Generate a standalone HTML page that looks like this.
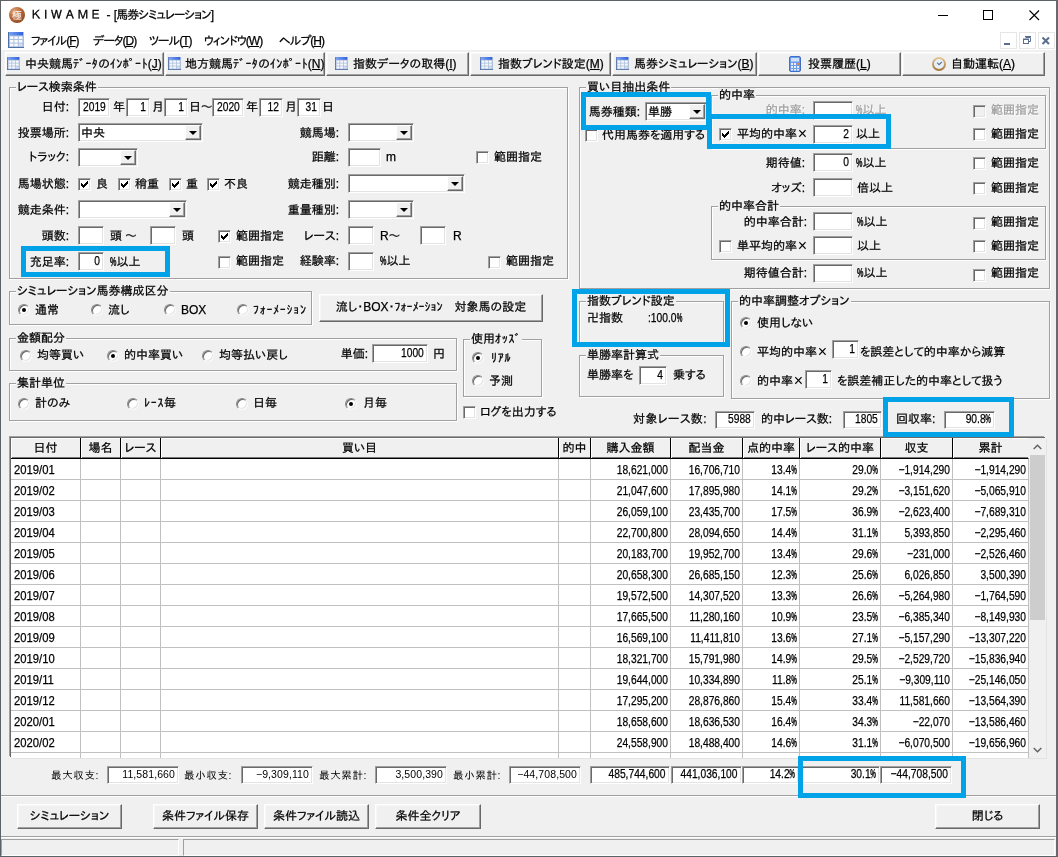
<!DOCTYPE html>
<html lang="ja"><head><meta charset="utf-8"><title>KIWAME</title>
<style>
html,body{margin:0;padding:0}
body{width:1058px;height:857px;overflow:hidden;background:#f0f0f0;position:relative;
 font-family:"Liberation Sans","IPAPGothic","IPAGothic",sans-serif;font-size:12px;color:#000;-webkit-text-stroke:0.25px #000}
#root{position:absolute;left:0;top:0;width:1058px;height:857px;will-change:transform}
#title{position:absolute;left:0;top:0;width:1058px;height:50px;background:#fff}
.abs{position:absolute}
.t{position:absolute;white-space:pre;line-height:14px;height:14px}
.ttl{font-size:12px}
.mn{font-size:12px;letter-spacing:-1px}
.lg{background:#f0f0f0;padding:0 1px}
.dis{color:#a0a0a0;-webkit-text-stroke:0.25px #a0a0a0;text-shadow:1px 1px 0 #fff}
.sm{font-size:10.5px;letter-spacing:0.6px;-webkit-text-stroke:0}
.num{font-size:12.5px;letter-spacing:0;transform:scaleX(.82);transform-origin:0 50%}
.t.num{display:inline-block}
.nr{position:absolute;right:3px;top:0.4px;transform-origin:100% 50%}
.td.r.num{transform-origin:100% 50%}
.num .pc{width:7px;transform:scaleX(.62)}
.dt{font-size:12.5px;transform:scaleX(.9);transform-origin:0 50%}
.ed{position:absolute;box-sizing:border-box;background:#fff;border:1px solid;border-color:#a0a0a0 #fff #fff #a0a0a0;
 box-shadow:inset 1px 1px 0 #696969,inset -1px -1px 0 #e3e3e3;padding:1px 3px 0 4px;white-space:pre;overflow:hidden}
.ed.r{text-align:right}
.ed.sm{font-size:10.5px;letter-spacing:0.1px;padding-top:0;-webkit-text-stroke:0}
.cbx{padding-left:2px}
.dd{position:absolute;right:1px;top:1px;width:16px;background:#f0f0f0;box-sizing:border-box;border:1px solid;border-color:#fff #696969 #696969 #fff;box-shadow:inset -1px -1px 0 #a0a0a0;display:block}
.dd b{position:absolute;left:3px;top:50%;margin-top:-2px;width:0;height:0;border-left:4px solid transparent;border-right:4px solid transparent;border-top:4px solid #000}
.cb{position:absolute;width:13px;height:13px;box-sizing:border-box;background:#fff;border:1px solid;border-color:#a0a0a0 #fff #fff #a0a0a0;box-shadow:inset 1px 1px 0 #696969,inset -1px -1px 0 #e3e3e3}
.cb.dis{background:#f0f0f0}
.cb svg{position:absolute;left:1px;top:1px}
.rd{position:absolute;width:12px;height:12px;box-sizing:border-box;border-radius:50%;background:#fff;border:1px solid;border-color:#8a8a8a #f8f8f8 #f8f8f8 #8a8a8a;box-shadow:inset 1px 1px 0 #696969,inset -1px -1px 0 #e3e3e3;transform:rotate(0deg)}
.rd i{position:absolute;left:3px;top:3px;width:4px;height:4px;border-radius:50%;background:#000}
.gb{position:absolute;border:1px solid #a0a0a0;box-shadow:1px 1px 0 #fff,inset 1px 1px 0 #fff}
.btn{position:absolute;box-sizing:border-box;background:#f0f0f0;border:1px solid;border-color:#fff #696969 #696969 #fff;box-shadow:inset -1px -1px 0 #a0a0a0,inset 1px 1px 0 #f7f7f7;text-align:center;white-space:pre}
.bb{position:absolute;border-style:solid;border-color:#00a2e8;z-index:5}
.mdib{position:absolute;top:32px;width:17px;height:17px;box-sizing:border-box;background:#fff;border:1px solid #e6e6e6}
.mdib svg{position:absolute;left:-1px;top:0}
#tbl{position:absolute;left:11px;top:438px;width:1035px;height:320px;background:#fff;overflow:hidden;
 box-shadow:-1px -1px 0 #696969,-2px -2px 0 #a0a0a0, 1px 1px 0 #e3e3e3}
.th{position:absolute;top:0;height:20px;line-height:20px;background:#f0f0f0;text-align:center;border-right:1px solid #000;border-bottom:1px solid #000;box-shadow:inset 1px 1px 0 #fff,inset 0 -1px 0 #777;white-space:pre}
.vl{position:absolute;top:21px;width:1px;height:300px;background:#c0c0c0}
.hl{position:absolute;left:0;width:1018px;height:1px;background:#c0c0c0}
.td{position:absolute;height:20px;line-height:22px;white-space:pre}
.td.r{text-align:right}
.sb{position:absolute;left:1018px;top:0;width:17px;height:320px;background:#f0f0f0}
.sb .thumb{position:absolute;left:1px;top:17px;width:15px;height:165px;background:#cdcdcd}
.sep{position:absolute;left:1px;width:1055px;height:1px;background:#a0a0a0;box-shadow:0 1px 0 #fff}
.stp{position:absolute;top:839px;height:17px;box-sizing:border-box;border:1px solid;border-color:#a0a0a0 #fff #fff #a0a0a0}
u{text-decoration:underline}
.pc{font-weight:bold;display:inline-block;width:6.4px;transform:scaleX(0.6);transform-origin:0 50%;letter-spacing:0}
.xx{-webkit-text-stroke:0;display:inline-block;width:11px;text-align:center;font-size:16px;line-height:10px;vertical-align:-1px;letter-spacing:0}
.hk{letter-spacing:0.7px}
.tbt .hk{letter-spacing:0.4px}
.btn .hk{letter-spacing:0}
.thl{border-right-color:#f0f0f0}

</style></head>
<body>
<div id="root">
<div id="title"></div>
<svg class="abs" style="left:9px;top:7px" width="16" height="16" viewBox="0 0 16 16"><defs><radialGradient id="ig" cx="35%" cy="30%" r="75%"><stop offset="0" stop-color="#e2a77c"/><stop offset="0.55" stop-color="#b8683a"/><stop offset="1" stop-color="#8f4a22"/></radialGradient></defs><circle cx="8" cy="8" r="8" fill="url(#ig)"/><text x="8" y="11.6" font-size="10" text-anchor="middle" fill="#fff" font-family="'Liberation Sans','IPAPGothic','IPAGothic',sans-serif">極</text></svg>
<span class="t ttl" style="left:32px;top:8px"><span style="letter-spacing:3.6px">ＫＩＷＡＭＥ</span> - <span style="letter-spacing:-0.9px">[馬券シミュレーション]</span></span>
<svg class="abs" style="left:930px;top:5px" width="120" height="22" viewBox="0 0 120 22"><path d="M8 10.5 H18" stroke="#000" stroke-width="1" fill="none"/><rect x="53.5" y="5.5" width="9" height="9" stroke="#000" fill="none"/><path d="M99.5 5.5 L109 15 M109 5.5 L99.5 15" stroke="#000" stroke-width="1.1" fill="none"/></svg>
<svg class="abs" style="left:8px;top:32px" width="16" height="16" viewBox="0 0 16 16"><defs><linearGradient id="gh8" x1="0" y1="0" x2="1" y2="0"><stop offset="0" stop-color="#7aa2f2"/><stop offset="1" stop-color="#2f62de"/></linearGradient></defs><rect x="0" y="0" width="16" height="16" fill="#4f6fa8"/><rect x="1" y="0" width="15" height="15" fill="#aebfdb"/><rect x="1" y="0" width="14" height="3.4" fill="url(#gh8)"/><g fill="#f7faff"><rect x="2" y="4.4" width="3.4" height="2.6"/><rect x="6.4" y="4.4" width="3.4" height="2.6"/><rect x="10.8" y="4.4" width="3.6" height="2.6"/><rect x="2" y="8" width="3.4" height="2.6"/><rect x="6.4" y="8" width="3.4" height="2.6"/><rect x="10.8" y="8" width="3.6" height="2.6"/><rect x="2" y="11.6" width="3.4" height="2.6"/><rect x="6.4" y="11.6" width="3.4" height="2.6"/><rect x="10.8" y="11.6" width="3.6" height="2.6" fill="#cfe0f7"/></g></svg>
<span class="t mn" style="left:31px;top:34px">ファイル(<u>F</u>)</span>
<span class="t mn" style="left:93px;top:34px">データ(<u>D</u>)</span>
<span class="t mn" style="left:149px;top:34px">ツール(<u>T</u>)</span>
<span class="t mn" style="left:204px;top:34px">ウィンドウ(<u>W</u>)</span>
<span class="t mn" style="left:279px;top:34px">ヘルプ(<u>H</u>)</span>
<div class="mdib" style="left:1000px"><svg width="16" height="16" viewBox="0 0 16 16"><rect x="4" y="10" width="6" height="2" fill="#5a6d8c"/></svg></div>
<div class="mdib" style="left:1019px"><svg width="16" height="16" viewBox="0 0 16 16"><path d="M6.5 4.5 H11.5 V8.5 H9.5" stroke="#5a6d8c" fill="none"/><path d="M6 3.5 H12" stroke="#5a6d8c" stroke-width="1"/><rect x="4.5" y="6.5" width="5" height="4" stroke="#5a6d8c" fill="#fff"/><path d="M4 6 H10" stroke="#5a6d8c" stroke-width="1"/></svg></div>
<div class="mdib" style="left:1038px"><svg width="16" height="16" viewBox="0 0 16 16"><path d="M4.5 4.5 L11 11 M11 4.5 L4.5 11" stroke="#5a6d8c" stroke-width="2" fill="none"/></svg></div>
<div class="btn tbb" style="left:5px;top:52px;width:159px;height:24px"></div>
<svg class="abs" style="left:7px;top:57px" width="13" height="13" viewBox="0 0 16 16"><defs><linearGradient id="gh7" x1="0" y1="0" x2="1" y2="0"><stop offset="0" stop-color="#7aa2f2"/><stop offset="1" stop-color="#2f62de"/></linearGradient></defs><rect x="0" y="0" width="16" height="16" fill="#4f6fa8"/><rect x="1" y="0" width="15" height="15" fill="#aebfdb"/><rect x="1" y="0" width="14" height="3.4" fill="url(#gh7)"/><g fill="#f7faff"><rect x="2" y="4.4" width="3.4" height="2.6"/><rect x="6.4" y="4.4" width="3.4" height="2.6"/><rect x="10.8" y="4.4" width="3.6" height="2.6"/><rect x="2" y="8" width="3.4" height="2.6"/><rect x="6.4" y="8" width="3.4" height="2.6"/><rect x="10.8" y="8" width="3.6" height="2.6"/><rect x="2" y="11.6" width="3.4" height="2.6"/><rect x="6.4" y="11.6" width="3.4" height="2.6"/><rect x="10.8" y="11.6" width="3.6" height="2.6" fill="#cfe0f7"/></g></svg>
<span class="t tbt" style="left:25px;top:57px">中央競馬<span class="hk">ﾃﾞｰﾀ</span>の<span class="hk">ｲﾝﾎﾟｰﾄ</span>(<u>J</u>)</span>
<div class="btn tbb" style="left:165px;top:52px;width:160px;height:24px"></div>
<svg class="abs" style="left:168px;top:57px" width="13" height="13" viewBox="0 0 16 16"><defs><linearGradient id="gh168" x1="0" y1="0" x2="1" y2="0"><stop offset="0" stop-color="#7aa2f2"/><stop offset="1" stop-color="#2f62de"/></linearGradient></defs><rect x="0" y="0" width="16" height="16" fill="#4f6fa8"/><rect x="1" y="0" width="15" height="15" fill="#aebfdb"/><rect x="1" y="0" width="14" height="3.4" fill="url(#gh168)"/><g fill="#f7faff"><rect x="2" y="4.4" width="3.4" height="2.6"/><rect x="6.4" y="4.4" width="3.4" height="2.6"/><rect x="10.8" y="4.4" width="3.6" height="2.6"/><rect x="2" y="8" width="3.4" height="2.6"/><rect x="6.4" y="8" width="3.4" height="2.6"/><rect x="10.8" y="8" width="3.6" height="2.6"/><rect x="2" y="11.6" width="3.4" height="2.6"/><rect x="6.4" y="11.6" width="3.4" height="2.6"/><rect x="10.8" y="11.6" width="3.6" height="2.6" fill="#cfe0f7"/></g></svg>
<span class="t tbt" style="left:185px;top:57px">地方競馬<span class="hk">ﾃﾞｰﾀ</span>の<span class="hk">ｲﾝﾎﾟｰﾄ</span>(<u>N</u>)</span>
<div class="btn tbb" style="left:326px;top:52px;width:143px;height:24px"></div>
<svg class="abs" style="left:335px;top:57px" width="13" height="13" viewBox="0 0 16 16"><defs><linearGradient id="gh335" x1="0" y1="0" x2="1" y2="0"><stop offset="0" stop-color="#7aa2f2"/><stop offset="1" stop-color="#2f62de"/></linearGradient></defs><rect x="0" y="0" width="16" height="16" fill="#4f6fa8"/><rect x="1" y="0" width="15" height="15" fill="#aebfdb"/><rect x="1" y="0" width="14" height="3.4" fill="url(#gh335)"/><g fill="#f7faff"><rect x="2" y="4.4" width="3.4" height="2.6"/><rect x="6.4" y="4.4" width="3.4" height="2.6"/><rect x="10.8" y="4.4" width="3.6" height="2.6"/><rect x="2" y="8" width="3.4" height="2.6"/><rect x="6.4" y="8" width="3.4" height="2.6"/><rect x="10.8" y="8" width="3.6" height="2.6"/><rect x="2" y="11.6" width="3.4" height="2.6"/><rect x="6.4" y="11.6" width="3.4" height="2.6"/><rect x="10.8" y="11.6" width="3.6" height="2.6" fill="#cfe0f7"/></g></svg>
<span class="t tbt" style="left:353px;top:57px">指数データの取得(<u>I</u>)</span>
<div class="btn tbb" style="left:470px;top:52px;width:141px;height:24px"></div>
<svg class="abs" style="left:480px;top:57px" width="13" height="13" viewBox="0 0 16 16"><defs><linearGradient id="gh480" x1="0" y1="0" x2="1" y2="0"><stop offset="0" stop-color="#7aa2f2"/><stop offset="1" stop-color="#2f62de"/></linearGradient></defs><rect x="0" y="0" width="16" height="16" fill="#4f6fa8"/><rect x="1" y="0" width="15" height="15" fill="#aebfdb"/><rect x="1" y="0" width="14" height="3.4" fill="url(#gh480)"/><g fill="#f7faff"><rect x="2" y="4.4" width="3.4" height="2.6"/><rect x="6.4" y="4.4" width="3.4" height="2.6"/><rect x="10.8" y="4.4" width="3.6" height="2.6"/><rect x="2" y="8" width="3.4" height="2.6"/><rect x="6.4" y="8" width="3.4" height="2.6"/><rect x="10.8" y="8" width="3.6" height="2.6"/><rect x="2" y="11.6" width="3.4" height="2.6"/><rect x="6.4" y="11.6" width="3.4" height="2.6"/><rect x="10.8" y="11.6" width="3.6" height="2.6" fill="#cfe0f7"/></g></svg>
<span class="t tbt" style="left:498px;top:57px">指数ブレンド設定(<u>M</u>)</span>
<div class="btn tbb" style="left:612px;top:52px;width:145px;height:24px"></div>
<svg class="abs" style="left:616px;top:57px" width="13" height="13" viewBox="0 0 16 16"><defs><linearGradient id="gh616" x1="0" y1="0" x2="1" y2="0"><stop offset="0" stop-color="#7aa2f2"/><stop offset="1" stop-color="#2f62de"/></linearGradient></defs><rect x="0" y="0" width="16" height="16" fill="#4f6fa8"/><rect x="1" y="0" width="15" height="15" fill="#aebfdb"/><rect x="1" y="0" width="14" height="3.4" fill="url(#gh616)"/><g fill="#f7faff"><rect x="2" y="4.4" width="3.4" height="2.6"/><rect x="6.4" y="4.4" width="3.4" height="2.6"/><rect x="10.8" y="4.4" width="3.6" height="2.6"/><rect x="2" y="8" width="3.4" height="2.6"/><rect x="6.4" y="8" width="3.4" height="2.6"/><rect x="10.8" y="8" width="3.6" height="2.6"/><rect x="2" y="11.6" width="3.4" height="2.6"/><rect x="6.4" y="11.6" width="3.4" height="2.6"/><rect x="10.8" y="11.6" width="3.6" height="2.6" fill="#cfe0f7"/></g></svg>
<span class="t tbt" style="left:634px;top:57px">馬券シミュレーション(<u>B</u>)</span>
<div class="btn tbb" style="left:758px;top:52px;width:143px;height:24px"></div>
<svg class="abs" style="left:789px;top:56px" width="12" height="16" viewBox="0 0 12 16"><rect x="0.5" y="0.5" width="11" height="15" rx="1.5" fill="#6f9be8" stroke="#3f6fc8"/><rect x="2" y="2" width="8" height="3.5" fill="#cfe0fb"/><g fill="#e8f0ff"><rect x="2" y="7" width="2" height="2"/><rect x="5" y="7" width="2" height="2"/><rect x="2" y="10" width="2" height="2"/><rect x="5" y="10" width="2" height="2"/><rect x="8" y="10" width="2" height="2"/><rect x="2" y="13" width="2" height="1.5"/><rect x="5" y="13" width="2" height="1.5"/><rect x="8" y="13" width="2" height="1.5"/></g><rect x="8" y="7" width="2" height="2" fill="#f08030"/></svg>
<span class="t tbt" style="left:808px;top:57px">投票履歴(<u>L</u>)</span>
<div class="btn tbb" style="left:902px;top:52px;width:143px;height:24px"></div>
<svg class="abs" style="left:932px;top:57px" width="14" height="14" viewBox="0 0 14 14"><defs><linearGradient id="ck" x1="0" y1="0" x2="0" y2="1"><stop offset="0" stop-color="#e3c48f"/><stop offset="1" stop-color="#a97a3c"/></linearGradient></defs><circle cx="7" cy="7" r="6" fill="#e6f0ff" stroke="url(#ck)" stroke-width="2"/><path d="M5.2 5.6 L7 7.6 L9.8 5" stroke="#6a6f78" stroke-width="1.1" fill="none"/></svg>
<span class="t tbt" style="left:951px;top:57px">自動運転(<u>A</u>)</span>
<div class="gb" style="left:9px;top:87px;width:557px;height:190px"></div>
<span class="t lg" style="left:16px;top:80px">レース検索条件</span>
<span class="t " style="left:9px;top:100px;width:60px;text-align:right;">日付:</span>
<div class="ed r" style="left:78px;top:98px;width:32px;height:19px;line-height:16px"><span class="num nr">2019</span></div>
<span class="t " style="left:113px;top:100px;">年</span>
<div class="ed r" style="left:126px;top:98px;width:24px;height:19px;line-height:16px"><span class="num nr">1</span></div>
<span class="t " style="left:152px;top:100px;">月</span>
<div class="ed r" style="left:164px;top:98px;width:24px;height:19px;line-height:16px"><span class="num nr">1</span></div>
<span class="t " style="left:189px;top:100px;">日～</span>
<div class="ed r" style="left:212px;top:98px;width:32px;height:19px;line-height:16px"><span class="num nr">2020</span></div>
<span class="t " style="left:246px;top:100px;">年</span>
<div class="ed r" style="left:259px;top:98px;width:24px;height:19px;line-height:16px"><span class="num nr">12</span></div>
<span class="t " style="left:285px;top:100px;">月</span>
<div class="ed r" style="left:297px;top:98px;width:24px;height:19px;line-height:16px"><span class="num nr">31</span></div>
<span class="t " style="left:322px;top:100px;">日</span>
<span class="t " style="left:9px;top:126px;width:60px;text-align:right;">投票場所:</span>
<div class="ed cbx" style="left:78px;top:123px;width:125px;height:19px;line-height:16px">中央<i class="dd" style="height:15px"><b></b></i></div>
<span class="t " style="left:279px;top:126px;width:60px;text-align:right;">競馬場:</span>
<div class="ed cbx" style="left:348px;top:123px;width:66px;height:19px;line-height:16px"><i class="dd" style="height:15px"><b></b></i></div>
<span class="t " style="left:9px;top:150px;width:60px;text-align:right;">トラック:</span>
<div class="ed cbx" style="left:78px;top:148px;width:60px;height:19px;line-height:16px"><i class="dd" style="height:15px"><b></b></i></div>
<span class="t " style="left:279px;top:150px;width:60px;text-align:right;">距離:</span>
<div class="ed " style="left:348px;top:148px;width:33px;height:19px;line-height:16px"></div>
<span class="t " style="left:386px;top:150px;">m</span>
<div class="cb" style="left:476px;top:151px"></div>
<span class="t " style="left:494px;top:150px;">範囲指定</span>
<span class="t " style="left:9px;top:177px;width:60px;text-align:right;">馬場状態:</span>
<div class="cb" style="left:78px;top:178px"><svg width="9" height="9" viewBox="0 0 9 9" shape-rendering="crispEdges"><path d="M1 3h1v1h1v1h1v-1h1v-1h1v-1h1v-1h1v3h-1v1h-1v1h-1v1h-1v1h-1v-1h-1v-1h-1z" fill="#000"/></svg></div>
<span class="t " style="left:96px;top:177px;">良</span>
<div class="cb" style="left:118px;top:178px"><svg width="9" height="9" viewBox="0 0 9 9" shape-rendering="crispEdges"><path d="M1 3h1v1h1v1h1v-1h1v-1h1v-1h1v-1h1v3h-1v1h-1v1h-1v1h-1v1h-1v-1h-1v-1h-1z" fill="#000"/></svg></div>
<span class="t " style="left:135px;top:177px;">稍重</span>
<div class="cb" style="left:169px;top:178px"><svg width="9" height="9" viewBox="0 0 9 9" shape-rendering="crispEdges"><path d="M1 3h1v1h1v1h1v-1h1v-1h1v-1h1v-1h1v3h-1v1h-1v1h-1v1h-1v1h-1v-1h-1v-1h-1z" fill="#000"/></svg></div>
<span class="t " style="left:186px;top:177px;">重</span>
<div class="cb" style="left:207px;top:178px"><svg width="9" height="9" viewBox="0 0 9 9" shape-rendering="crispEdges"><path d="M1 3h1v1h1v1h1v-1h1v-1h1v-1h1v-1h1v3h-1v1h-1v1h-1v1h-1v1h-1v-1h-1v-1h-1z" fill="#000"/></svg></div>
<span class="t " style="left:224px;top:177px;">不良</span>
<span class="t " style="left:269px;top:177px;width:70px;text-align:right;">競走種別:</span>
<div class="ed cbx" style="left:348px;top:174px;width:117px;height:19px;line-height:16px"><i class="dd" style="height:15px"><b></b></i></div>
<span class="t " style="left:9px;top:203px;width:60px;text-align:right;">競走条件:</span>
<div class="ed cbx" style="left:78px;top:200px;width:109px;height:19px;line-height:16px"><i class="dd" style="height:15px"><b></b></i></div>
<span class="t " style="left:269px;top:203px;width:70px;text-align:right;">重量種別:</span>
<div class="ed cbx" style="left:348px;top:200px;width:66px;height:19px;line-height:16px"><i class="dd" style="height:15px"><b></b></i></div>
<span class="t " style="left:9px;top:229px;width:60px;text-align:right;">頭数:</span>
<div class="ed " style="left:78px;top:226px;width:26px;height:19px;line-height:16px"></div>
<span class="t " style="left:110px;top:229px;">頭 ～</span>
<div class="ed " style="left:150px;top:226px;width:26px;height:19px;line-height:16px"></div>
<span class="t " style="left:182px;top:229px;">頭</span>
<div class="cb" style="left:218px;top:230px"><svg width="9" height="9" viewBox="0 0 9 9" shape-rendering="crispEdges"><path d="M1 3h1v1h1v1h1v-1h1v-1h1v-1h1v-1h1v3h-1v1h-1v1h-1v1h-1v1h-1v-1h-1v-1h-1z" fill="#000"/></svg></div>
<span class="t " style="left:236px;top:229px;">範囲指定</span>
<span class="t " style="left:279px;top:229px;width:60px;text-align:right;">レース:</span>
<div class="ed " style="left:348px;top:226px;width:26px;height:19px;line-height:16px"></div>
<span class="t " style="left:380px;top:229px;">R～</span>
<div class="ed " style="left:420px;top:226px;width:26px;height:19px;line-height:16px"></div>
<span class="t " style="left:453px;top:229px;">R</span>
<span class="t " style="left:9px;top:255px;width:60px;text-align:right;">充足率:</span>
<div class="ed r" style="left:78px;top:252px;width:26px;height:19px;line-height:16px"><span class="num nr">0</span></div>
<span class="t " style="left:110px;top:255px;"><span class="pc">%</span>以上</span>
<div class="cb" style="left:218px;top:256px"></div>
<span class="t " style="left:236px;top:254px;">範囲指定</span>
<span class="t " style="left:279px;top:254px;width:60px;text-align:right;">経験率:</span>
<div class="ed " style="left:348px;top:252px;width:26px;height:19px;line-height:16px"></div>
<span class="t " style="left:380px;top:254px;"><span class="pc">%</span>以上</span>
<div class="cb" style="left:488px;top:256px"></div>
<span class="t " style="left:506px;top:254px;">範囲指定</span>
<div class="bb" style="left:21px;top:246px;width:139px;height:21px;border-width:5px"></div>
<div class="gb" style="left:579px;top:87px;width:469px;height:200px"></div>
<span class="t lg" style="left:586px;top:80px">買い目抽出条件</span>
<div class="gb" style="left:711px;top:95px;width:333px;height:52px"></div>
<span class="t lg" style="left:718px;top:88px">的中率</span>
<div class="gb" style="left:711px;top:206px;width:333px;height:52px"></div>
<span class="t lg" style="left:718px;top:199px">的中率合計</span>
<span class="t " style="left:580px;top:105px;width:60px;text-align:right;">馬券種類:</span>
<div class="ed cbx" style="left:645px;top:102px;width:62px;height:19px;line-height:16px">単勝<i class="dd" style="height:15px"><b></b></i></div>
<div class="cb" style="left:585px;top:129px"></div>
<span class="t " style="left:602px;top:128px;">代用馬券を適用する</span>
<span class="t dis" style="left:725px;top:103px;width:80px;text-align:right;">的中率:</span>
<div class="ed " style="left:813px;top:101px;width:40px;height:19px;line-height:16px"></div>
<span class="t dis" style="left:856px;top:103px;"><span class="pc">%</span>以上</span>
<div class="cb dis" style="left:973px;top:105px"></div>
<span class="t dis" style="left:991px;top:103px;">範囲指定</span>
<div class="cb" style="left:719px;top:128px"><svg width="9" height="9" viewBox="0 0 9 9" shape-rendering="crispEdges"><path d="M1 3h1v1h1v1h1v-1h1v-1h1v-1h1v-1h1v3h-1v1h-1v1h-1v1h-1v1h-1v-1h-1v-1h-1z" fill="#000"/></svg></div>
<span class="t " style="left:737px;top:127px;">平均的中率<span class="xx">×</span></span>
<div class="ed r" style="left:813px;top:125px;width:40px;height:19px;line-height:16px"><span class="num nr">2</span></div>
<span class="t " style="left:856px;top:127px;">以上</span>
<div class="cb" style="left:973px;top:128px"></div>
<span class="t " style="left:991px;top:127px;">範囲指定</span>
<span class="t " style="left:725px;top:156px;width:80px;text-align:right;">期待値:</span>
<div class="ed r" style="left:813px;top:153px;width:40px;height:19px;line-height:16px"><span class="num nr">0</span></div>
<span class="t " style="left:856px;top:156px;"><span class="pc">%</span>以上</span>
<div class="cb" style="left:973px;top:157px"></div>
<span class="t " style="left:991px;top:156px;">範囲指定</span>
<span class="t " style="left:725px;top:181px;width:80px;text-align:right;">オッズ:</span>
<div class="ed " style="left:813px;top:178px;width:40px;height:19px;line-height:16px"></div>
<span class="t " style="left:857px;top:181px;">倍以上</span>
<div class="cb" style="left:973px;top:182px"></div>
<span class="t " style="left:991px;top:181px;">範囲指定</span>
<span class="t " style="left:717px;top:215px;width:90px;text-align:right;">的中率合計:</span>
<div class="ed " style="left:813px;top:212px;width:40px;height:19px;line-height:16px"></div>
<span class="t " style="left:857px;top:215px;"><span class="pc">%</span>以上</span>
<div class="cb" style="left:973px;top:217px"></div>
<span class="t " style="left:991px;top:215px;">範囲指定</span>
<div class="cb" style="left:719px;top:240px"></div>
<span class="t " style="left:737px;top:239px;">単平均的率<span class="xx">×</span></span>
<div class="ed " style="left:813px;top:236px;width:40px;height:19px;line-height:16px"></div>
<span class="t " style="left:857px;top:239px;">以上</span>
<div class="cb" style="left:973px;top:240px"></div>
<span class="t " style="left:991px;top:239px;">範囲指定</span>
<span class="t " style="left:717px;top:266px;width:90px;text-align:right;">期待値合計:</span>
<div class="ed " style="left:813px;top:264px;width:40px;height:19px;line-height:16px"></div>
<span class="t " style="left:857px;top:266px;"><span class="pc">%</span>以上</span>
<div class="cb" style="left:973px;top:269px"></div>
<span class="t " style="left:991px;top:266px;">範囲指定</span>
<div class="bb" style="left:581px;top:92px;width:120px;height:28px;border-width:5px"></div>
<div class="bb" style="left:707px;top:114px;width:174px;height:25px;border-width:5px"></div>
<div class="gb" style="left:9px;top:291px;width:301px;height:32px"></div>
<span class="t lg" style="left:16px;top:284px">シミュレーション馬券構成区分</span>
<div class="rd" style="left:18px;top:304px"><i></i></div>
<span class="t " style="left:35px;top:303px;">通常</span>
<div class="rd" style="left:91px;top:304px"></div>
<span class="t " style="left:108px;top:303px;">流し</span>
<div class="rd" style="left:164px;top:304px"></div>
<span class="t " style="left:181px;top:303px;">BOX</span>
<div class="rd" style="left:237px;top:304px"></div>
<span class="t " style="left:253px;top:303px;"><span class="hk">ﾌｫｰﾒｰｼｮﾝ</span></span>
<div class="btn " style="left:319px;top:294px;width:224px;height:28px;line-height:25px">流し・BOX・<span class="hk">ﾌｫｰﾒｰｼｮﾝ</span>　対象馬の設定</div>
<div class="gb" style="left:9px;top:338px;width:446px;height:31px"></div>
<span class="t lg" style="left:16px;top:331px">金額配分</span>
<div class="rd" style="left:20px;top:350px"></div>
<span class="t " style="left:37px;top:348px;">均等買い</span>
<div class="rd" style="left:107px;top:350px"><i></i></div>
<span class="t " style="left:124px;top:348px;">的中率買い</span>
<div class="rd" style="left:202px;top:350px"></div>
<span class="t " style="left:219px;top:348px;">均等払い戻し</span>
<span class="t " style="left:328px;top:347px;width:40px;text-align:right;">単価:</span>
<div class="ed r" style="left:372px;top:344px;width:56px;height:19px;line-height:16px"><span class="num nr">1000</span></div>
<span class="t " style="left:433px;top:347px;">円</span>
<div class="gb" style="left:9px;top:383px;width:446px;height:36px"></div>
<span class="t lg" style="left:16px;top:376px">集計単位</span>
<div class="rd" style="left:18px;top:398px"></div>
<span class="t " style="left:35px;top:396px;">計のみ</span>
<div class="rd" style="left:127px;top:398px"></div>
<span class="t " style="left:144px;top:396px;"><span class="hk">ﾚｰｽ</span>毎</span>
<div class="rd" style="left:236px;top:398px"></div>
<span class="t " style="left:253px;top:396px;">日毎</span>
<div class="rd" style="left:345px;top:398px"><i></i></div>
<span class="t " style="left:363px;top:396px;">月毎</span>
<div class="gb" style="left:463px;top:339px;width:77px;height:56px"></div>
<span class="t lg" style="left:470px;top:332px">使用<span class="hk">ｵｯｽﾞ</span></span>
<div class="rd" style="left:472px;top:352px"><i></i></div>
<span class="t " style="left:491px;top:351px;"><span class="hk">ﾘｱﾙ</span></span>
<div class="rd" style="left:472px;top:375px"></div>
<span class="t " style="left:489px;top:374px;">予測</span>
<div class="cb" style="left:463px;top:406px"></div>
<span class="t " style="left:480px;top:405px;">ログを出力する</span>
<div class="gb" style="left:579px;top:301px;width:143px;height:42px"></div>
<span class="t lg" style="left:586px;top:294px">指数ブレンド設定</span>
<span class="t " style="left:587px;top:311px;">卍指数</span>
<span class="t num" style="left:648px;top:311px;">:100.0<span class="pc">%</span></span>
<div class="bb" style="left:572px;top:289px;width:148px;height:48px;border-width:5px"></div>
<div class="gb" style="left:579px;top:355px;width:143px;height:40px"></div>
<span class="t lg" style="left:586px;top:348px">単勝率計算式</span>
<span class="t " style="left:587px;top:368px;">単勝率を</span>
<div class="ed r" style="left:639px;top:366px;width:28px;height:19px;line-height:16px"><span class="num nr">4</span></div>
<span class="t " style="left:673px;top:368px;">乗する</span>
<div class="gb" style="left:731px;top:301px;width:317px;height:96px"></div>
<span class="t lg" style="left:738px;top:294px">的中率調整オプション</span>
<div class="rd" style="left:740px;top:317px"><i></i></div>
<span class="t " style="left:757px;top:316px;">使用しない</span>
<div class="rd" style="left:740px;top:346px"></div>
<span class="t " style="left:757px;top:345px;">平均的中率<span class="xx">×</span></span>
<div class="ed r" style="left:832px;top:340px;width:27px;height:19px;line-height:16px"><span class="num nr">1</span></div>
<span class="t " style="left:860px;top:345px;">を誤差として的中率から減算</span>
<div class="rd" style="left:740px;top:375px"></div>
<span class="t " style="left:757px;top:374px;">的中率<span class="xx">×</span></span>
<div class="ed r" style="left:805px;top:370px;width:27px;height:19px;line-height:16px"><span class="num nr">1</span></div>
<span class="t " style="left:837px;top:374px;">を誤差補正した的中率として扱う</span>
<span class="t " style="left:607px;top:412px;width:100px;text-align:right;letter-spacing:0.4px;">対象レース数:</span>
<div class="ed r" style="left:715px;top:411px;width:40px;height:18px;line-height:15px"><span class="num nr">5988</span></div>
<span class="t " style="left:761px;top:412px;">的中レース数:</span>
<div class="ed r" style="left:843px;top:411px;width:39px;height:18px;line-height:15px"><span class="num nr">1805</span></div>
<span class="t " style="left:896px;top:412px;">回収率:</span>
<div class="ed r" style="left:944px;top:411px;width:51px;height:18px;line-height:15px"><span class="num nr">90.8<span class="pc">%</span></span></div>
<div class="bb" style="left:883px;top:397px;width:121px;height:30px;border-width:5px"></div>
<div id="tbl">
<div class="th" style="left:0px;width:69px">日付</div>
<div class="th" style="left:70px;width:39px">場名</div>
<div class="th" style="left:110px;width:39px">レース</div>
<div class="th" style="left:150px;width:397px">買い目</div>
<div class="th" style="left:548px;width:31px">的中</div>
<div class="th" style="left:580px;width:79px">購入金額</div>
<div class="th" style="left:660px;width:71px">配当金</div>
<div class="th" style="left:732px;width:56px">点的中率</div>
<div class="th" style="left:789px;width:80px">レース的中率</div>
<div class="th" style="left:870px;width:71px">収支</div>
<div class="th thl" style="left:942px;width:75px">累計</div>
<div class="vl" style="left:69px"></div>
<div class="vl" style="left:109px"></div>
<div class="vl" style="left:149px"></div>
<div class="vl" style="left:547px"></div>
<div class="vl" style="left:579px"></div>
<div class="vl" style="left:659px"></div>
<div class="vl" style="left:731px"></div>
<div class="vl" style="left:788px"></div>
<div class="vl" style="left:869px"></div>
<div class="vl" style="left:941px"></div>
<div class="vl" style="left:1017px"></div>
<div class="hl" style="top:41px"></div>
<span class="td dt" style="left:3px;top:21px">2019/01</span>
<span class="td num r" style="left:580px;width:77px;top:21px">18,621,000</span>
<span class="td num r" style="left:660px;width:69px;top:21px">16,706,710</span>
<span class="td num r" style="left:732px;width:54px;top:21px">13.4<span class="pc">%</span></span>
<span class="td num r" style="left:789px;width:78px;top:21px">29.0<span class="pc">%</span></span>
<span class="td num r" style="left:870px;width:69px;top:21px">−1,914,290</span>
<span class="td num r" style="left:942px;width:73px;top:21px">−1,914,290</span>
<div class="hl" style="top:62px"></div>
<span class="td dt" style="left:3px;top:42px">2019/02</span>
<span class="td num r" style="left:580px;width:77px;top:42px">21,047,600</span>
<span class="td num r" style="left:660px;width:69px;top:42px">17,895,980</span>
<span class="td num r" style="left:732px;width:54px;top:42px">14.1<span class="pc">%</span></span>
<span class="td num r" style="left:789px;width:78px;top:42px">29.2<span class="pc">%</span></span>
<span class="td num r" style="left:870px;width:69px;top:42px">−3,151,620</span>
<span class="td num r" style="left:942px;width:73px;top:42px">−5,065,910</span>
<div class="hl" style="top:83px"></div>
<span class="td dt" style="left:3px;top:63px">2019/03</span>
<span class="td num r" style="left:580px;width:77px;top:63px">26,059,100</span>
<span class="td num r" style="left:660px;width:69px;top:63px">23,435,700</span>
<span class="td num r" style="left:732px;width:54px;top:63px">17.5<span class="pc">%</span></span>
<span class="td num r" style="left:789px;width:78px;top:63px">36.9<span class="pc">%</span></span>
<span class="td num r" style="left:870px;width:69px;top:63px">−2,623,400</span>
<span class="td num r" style="left:942px;width:73px;top:63px">−7,689,310</span>
<div class="hl" style="top:104px"></div>
<span class="td dt" style="left:3px;top:84px">2019/04</span>
<span class="td num r" style="left:580px;width:77px;top:84px">22,700,800</span>
<span class="td num r" style="left:660px;width:69px;top:84px">28,094,650</span>
<span class="td num r" style="left:732px;width:54px;top:84px">14.4<span class="pc">%</span></span>
<span class="td num r" style="left:789px;width:78px;top:84px">31.1<span class="pc">%</span></span>
<span class="td num r" style="left:870px;width:69px;top:84px">5,393,850</span>
<span class="td num r" style="left:942px;width:73px;top:84px">−2,295,460</span>
<div class="hl" style="top:125px"></div>
<span class="td dt" style="left:3px;top:105px">2019/05</span>
<span class="td num r" style="left:580px;width:77px;top:105px">20,183,700</span>
<span class="td num r" style="left:660px;width:69px;top:105px">19,952,700</span>
<span class="td num r" style="left:732px;width:54px;top:105px">13.4<span class="pc">%</span></span>
<span class="td num r" style="left:789px;width:78px;top:105px">29.6<span class="pc">%</span></span>
<span class="td num r" style="left:870px;width:69px;top:105px">−231,000</span>
<span class="td num r" style="left:942px;width:73px;top:105px">−2,526,460</span>
<div class="hl" style="top:146px"></div>
<span class="td dt" style="left:3px;top:126px">2019/06</span>
<span class="td num r" style="left:580px;width:77px;top:126px">20,658,300</span>
<span class="td num r" style="left:660px;width:69px;top:126px">26,685,150</span>
<span class="td num r" style="left:732px;width:54px;top:126px">12.3<span class="pc">%</span></span>
<span class="td num r" style="left:789px;width:78px;top:126px">25.6<span class="pc">%</span></span>
<span class="td num r" style="left:870px;width:69px;top:126px">6,026,850</span>
<span class="td num r" style="left:942px;width:73px;top:126px">3,500,390</span>
<div class="hl" style="top:167px"></div>
<span class="td dt" style="left:3px;top:147px">2019/07</span>
<span class="td num r" style="left:580px;width:77px;top:147px">19,572,500</span>
<span class="td num r" style="left:660px;width:69px;top:147px">14,307,520</span>
<span class="td num r" style="left:732px;width:54px;top:147px">13.3<span class="pc">%</span></span>
<span class="td num r" style="left:789px;width:78px;top:147px">26.6<span class="pc">%</span></span>
<span class="td num r" style="left:870px;width:69px;top:147px">−5,264,980</span>
<span class="td num r" style="left:942px;width:73px;top:147px">−1,764,590</span>
<div class="hl" style="top:188px"></div>
<span class="td dt" style="left:3px;top:168px">2019/08</span>
<span class="td num r" style="left:580px;width:77px;top:168px">17,665,500</span>
<span class="td num r" style="left:660px;width:69px;top:168px">11,280,160</span>
<span class="td num r" style="left:732px;width:54px;top:168px">10.9<span class="pc">%</span></span>
<span class="td num r" style="left:789px;width:78px;top:168px">23.5<span class="pc">%</span></span>
<span class="td num r" style="left:870px;width:69px;top:168px">−6,385,340</span>
<span class="td num r" style="left:942px;width:73px;top:168px">−8,149,930</span>
<div class="hl" style="top:209px"></div>
<span class="td dt" style="left:3px;top:189px">2019/09</span>
<span class="td num r" style="left:580px;width:77px;top:189px">16,569,100</span>
<span class="td num r" style="left:660px;width:69px;top:189px">11,411,810</span>
<span class="td num r" style="left:732px;width:54px;top:189px">13.6<span class="pc">%</span></span>
<span class="td num r" style="left:789px;width:78px;top:189px">27.1<span class="pc">%</span></span>
<span class="td num r" style="left:870px;width:69px;top:189px">−5,157,290</span>
<span class="td num r" style="left:942px;width:73px;top:189px">−13,307,220</span>
<div class="hl" style="top:230px"></div>
<span class="td dt" style="left:3px;top:210px">2019/10</span>
<span class="td num r" style="left:580px;width:77px;top:210px">18,321,700</span>
<span class="td num r" style="left:660px;width:69px;top:210px">15,791,980</span>
<span class="td num r" style="left:732px;width:54px;top:210px">14.9<span class="pc">%</span></span>
<span class="td num r" style="left:789px;width:78px;top:210px">29.5<span class="pc">%</span></span>
<span class="td num r" style="left:870px;width:69px;top:210px">−2,529,720</span>
<span class="td num r" style="left:942px;width:73px;top:210px">−15,836,940</span>
<div class="hl" style="top:251px"></div>
<span class="td dt" style="left:3px;top:231px">2019/11</span>
<span class="td num r" style="left:580px;width:77px;top:231px">19,644,000</span>
<span class="td num r" style="left:660px;width:69px;top:231px">10,334,890</span>
<span class="td num r" style="left:732px;width:54px;top:231px">11.8<span class="pc">%</span></span>
<span class="td num r" style="left:789px;width:78px;top:231px">25.1<span class="pc">%</span></span>
<span class="td num r" style="left:870px;width:69px;top:231px">−9,309,110</span>
<span class="td num r" style="left:942px;width:73px;top:231px">−25,146,050</span>
<div class="hl" style="top:272px"></div>
<span class="td dt" style="left:3px;top:252px">2019/12</span>
<span class="td num r" style="left:580px;width:77px;top:252px">17,295,200</span>
<span class="td num r" style="left:660px;width:69px;top:252px">28,876,860</span>
<span class="td num r" style="left:732px;width:54px;top:252px">15.4<span class="pc">%</span></span>
<span class="td num r" style="left:789px;width:78px;top:252px">33.4<span class="pc">%</span></span>
<span class="td num r" style="left:870px;width:69px;top:252px">11,581,660</span>
<span class="td num r" style="left:942px;width:73px;top:252px">−13,564,390</span>
<div class="hl" style="top:293px"></div>
<span class="td dt" style="left:3px;top:273px">2020/01</span>
<span class="td num r" style="left:580px;width:77px;top:273px">18,658,600</span>
<span class="td num r" style="left:660px;width:69px;top:273px">18,636,530</span>
<span class="td num r" style="left:732px;width:54px;top:273px">16.4<span class="pc">%</span></span>
<span class="td num r" style="left:789px;width:78px;top:273px">34.3<span class="pc">%</span></span>
<span class="td num r" style="left:870px;width:69px;top:273px">−22,070</span>
<span class="td num r" style="left:942px;width:73px;top:273px">−13,586,460</span>
<div class="hl" style="top:314px"></div>
<span class="td dt" style="left:3px;top:294px">2020/02</span>
<span class="td num r" style="left:580px;width:77px;top:294px">24,558,900</span>
<span class="td num r" style="left:660px;width:69px;top:294px">18,488,400</span>
<span class="td num r" style="left:732px;width:54px;top:294px">14.6<span class="pc">%</span></span>
<span class="td num r" style="left:789px;width:78px;top:294px">31.1<span class="pc">%</span></span>
<span class="td num r" style="left:870px;width:69px;top:294px">−6,070,500</span>
<span class="td num r" style="left:942px;width:73px;top:294px">−19,656,960</span>
<span class="td dt" style="left:3px;top:315px">2020/03</span>
<div class="sb"><div class="thumb"></div><svg style="position:absolute;left:4px;top:6px" width="9" height="6" viewBox="0 0 9 6"><path d="M0.7 5 L4.5 1.2 L8.3 5" stroke="#606060" stroke-width="1.4" fill="none"/></svg><svg style="position:absolute;left:4px;top:309px" width="9" height="6" viewBox="0 0 9 6"><path d="M0.7 1 L4.5 4.8 L8.3 1" stroke="#606060" stroke-width="1.4" fill="none"/></svg></div>
</div>
<span class="t sm" style="left:39px;top:768px;width:60px;text-align:right;">最大収支:</span>
<div class="ed sm r" style="left:107px;top:766px;width:72px;height:18px;line-height:15px">11,581,660</div>
<span class="t sm" style="left:172px;top:768px;width:60px;text-align:right;">最小収支:</span>
<div class="ed sm r" style="left:241px;top:766px;width:72px;height:18px;line-height:15px">−9,309,110</div>
<span class="t sm" style="left:307px;top:768px;width:60px;text-align:right;">最大累計:</span>
<div class="ed sm r" style="left:375px;top:766px;width:72px;height:18px;line-height:15px">3,500,390</div>
<span class="t sm" style="left:441px;top:768px;width:60px;text-align:right;">最小累計:</span>
<div class="ed sm r" style="left:509px;top:766px;width:72px;height:18px;line-height:15px">−44,708,500</div>
<div class="ed r" style="left:590px;top:766px;width:80px;height:18px;line-height:15px"><span class="num nr">485,744,600</span></div>
<div class="ed r" style="left:671px;top:766px;width:71px;height:18px;line-height:15px"><span class="num nr">441,036,100</span></div>
<div class="ed r" style="left:742px;top:766px;width:57px;height:18px;line-height:15px"><span class="num nr">14.2<span class="pc">%</span></span></div>
<div class="ed r" style="left:799px;top:766px;width:81px;height:18px;line-height:15px"><span class="num nr">30.1<span class="pc">%</span></span></div>
<div class="ed r" style="left:880px;top:766px;width:72px;height:18px;line-height:15px"><span class="num nr">−44,708,500</span></div>
<div class="bb" style="left:798px;top:756px;width:158px;height:32px;border-width:5px"></div>
<div class="sep" style="top:795px"></div>
<div class="bb" style="left:798px;top:756px;width:158px;height:32px;border-width:5px"></div>
<div class="btn " style="left:17px;top:804px;width:105px;height:25px;line-height:22px">シミュレーション</div>
<div class="btn " style="left:153px;top:804px;width:105px;height:25px;line-height:22px">条件ファイル保存</div>
<div class="btn " style="left:264px;top:804px;width:105px;height:25px;line-height:22px">条件ファイル読込</div>
<div class="btn " style="left:375px;top:804px;width:106px;height:25px;line-height:22px">条件全クリア</div>
<div class="btn " style="left:935px;top:804px;width:105px;height:25px;line-height:22px">閉じる</div>
<div class="sep" style="top:836px"></div>
<div class="stp" style="left:1px;width:178px"></div>
<div class="stp" style="left:183px;width:872px"></div>
<div style="position:absolute;left:0;top:0;width:1055px;height:855px;border:1px solid #5d6266;border-right:2px solid #666a6e;pointer-events:none;z-index:9"></div>
</div>
</body></html>
